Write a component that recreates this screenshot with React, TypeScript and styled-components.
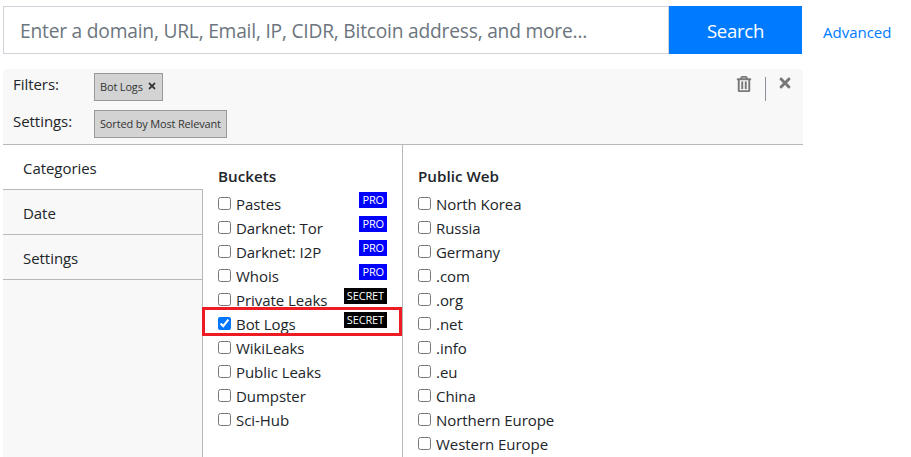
import React from "react";
import styled, { createGlobalStyle } from "styled-components";
import { FaRegTrashAlt, FaTimes } from "react-icons/fa";

const Global = createGlobalStyle`
  html, body { margin: 0; padding: 0; background: #fff; height: 457px; overflow: hidden; }
  body { font-family: "Open Sans", "Noto Sans", sans-serif; color: #212529; }
`;
const Page = styled.div`
  display: flex; flex-direction: column; height: 457px; overflow: hidden; padding: 6px 0 0 3px; box-sizing: border-box;
`;
const SearchRow = styled.form`
  display: flex; align-items: stretch; height: 48px; margin: 0;
`;
const SearchInput = styled.input`
  width: 666px; box-sizing: border-box; border: 1px solid #ced4da; padding: 0 16px;
  font: 19.2px "Open Sans", sans-serif; letter-spacing: -0.21px; color: #495057; outline: none;
  &::placeholder { color: #6c757d; opacity: 1; }
`;
const SearchButton = styled.button`
  width: 133px; border: 0; background: #007bff; color: #fff; font: 18.6px "Open Sans", sans-serif; letter-spacing: -0.3px; padding: 0;
`;
const AdvancedLink = styled.a`
  margin: 16px 0 0 21px; font-size: 15px; letter-spacing: 0; line-height: 20px; color: #007bff;
`;
const Panel = styled.section`
  width: 800px; margin-top: 15px; flex: 1; min-height: 0; display: flex; flex-direction: column;
`;
const FilterBar = styled.div`
  position: relative; height: 76px; box-sizing: border-box; background: #f8f8f8; border-bottom: 1px solid #b8b8b8;
  border-radius: 3px 3px 0 0; padding: 4px 0 0 10px; display: flex; flex-direction: column; gap: 9px;
`;
const FilterRow = styled.div`
  display: flex; align-items: flex-start; height: 28px;
`;
const FilterLabel = styled.span`
  width: 81px; font-size: 15px; letter-spacing: -0.05px; line-height: 22px;
`;
const Tag = styled.span`
  display: inline-flex; align-items: center; gap: 4px; height: 28px; box-sizing: border-box; padding: 0 5px 2px;
  background: #d3d3d3; border: 1px solid #999; font-size: 11px; letter-spacing: -0.17px; color: #333;
`;
const BarActions = styled.div`
  position: absolute; top: 6px; right: 10px; display: flex; align-items: flex-start; color: #777;
`;
const TrashIcon = styled(FaRegTrashAlt)`
  stroke: currentColor; stroke-width: 14px; margin-top: 1px;
`;
const Divider = styled.span`
  width: 1px; height: 24px; margin: 2px 11px 0 13px; background: #8a8f99;
`;
const Body = styled.div`
  flex: 1; min-height: 0; display: flex;
`;
const Tabs = styled.nav`
  width: 200px; box-sizing: border-box; display: flex; flex-direction: column; background: #f8f8f8; border-right: 1px solid #b8b8b8;
`;
const Tab = styled.div<{ $active?: boolean }>`
  height: 45px; box-sizing: border-box; padding: 1px 0 0 20px; display: flex; align-items: center;
  font-size: 15px; letter-spacing: -0.05px; background: ${p => (p.$active ? "#fff" : "transparent")};
  border-bottom: 1px solid #b8b8b8;
  margin-right: ${p => (p.$active ? "-1px" : "0")};
`;
const Column = styled.div<{ $divided?: boolean }>`
  width: 200px; box-sizing: border-box; padding: 20px 15px 0; ${p => p.$divided && "border-right: 1px solid #b8b8b8;"}
`;
const ColumnHead = styled.h3`
  margin: 0 0 5px; font-size: 15.2px; font-weight: 600; line-height: 22px;
`;
const OptionRow = styled.label<{ $marked?: boolean }>`
  position: relative; display: flex; align-items: center; height: 24px; font-size: 15px; letter-spacing: -0.05px;
  ${p => p.$marked && `&::after { content: ""; position: absolute; left: -16px; right: -15px; top: -5px; height: 29px; box-sizing: border-box; border: 3px solid #ed1c24; pointer-events: none; }`}
`;
const Check = styled.input`
  width: 13px; height: 13px; margin: 0 5px 2px 0; accent-color: #0075ff;
`;
const Badge = styled.span<{ $kind: "pro" | "secret" }>`
  position: absolute; top: 0; right: 0; height: 16px; line-height: 16px; padding: 0 3px; font-size: 11px;
  letter-spacing: -0.15px; color: #fff; background: ${p => (p.$kind === "pro" ? "#0000ff" : "#000")};
`;

const buckets: [string, ("pro" | "secret")?, boolean?][] = [
  ["Pastes", "pro"], ["Darknet: Tor", "pro"], ["Darknet: I2P", "pro"], ["Whois", "pro"],
  ["Private Leaks", "secret"], ["Bot Logs", "secret", true], ["WikiLeaks"], ["Public Leaks"], ["Dumpster"], ["Sci-Hub"],
];
const web = ["North Korea", "Russia", "Germany", ".com", ".org", ".net", ".info", ".eu", "China", "Northern Europe", "Western Europe"];

export default function App() {
  return (
    <Page>
      <Global />
      <SearchRow onSubmit={e => e.preventDefault()}>
        <SearchInput placeholder="Enter a domain, URL, Email, IP, CIDR, Bitcoin address, and more..." />
        <SearchButton type="submit">Search</SearchButton>
        <AdvancedLink>Advanced</AdvancedLink>
      </SearchRow>
      <Panel>
        <FilterBar>
          <FilterRow>
            <FilterLabel>Filters:</FilterLabel>
            <Tag>Bot Logs <FaTimes size={10} /></Tag>
          </FilterRow>
          <FilterRow>
            <FilterLabel>Settings:</FilterLabel>
            <Tag>Sorted by Most Relevant</Tag>
          </FilterRow>
          <BarActions>
            <TrashIcon size={16} />
            <Divider />
            <FaTimes size={16} />
          </BarActions>
        </FilterBar>
        <Body>
          <Tabs>
            <Tab $active>Categories</Tab>
            <Tab>Date</Tab>
            <Tab>Settings</Tab>
          </Tabs>
          <Column $divided>
            <ColumnHead>Buckets</ColumnHead>
            {buckets.map(([name, kind, checked]) => (
              <OptionRow key={name} $marked={checked}>
                <Check type="checkbox" defaultChecked={checked} />
                {name}
                {kind && <Badge $kind={kind}>{kind.toUpperCase()}</Badge>}
              </OptionRow>
            ))}
          </Column>
          <Column>
            <ColumnHead>Public Web</ColumnHead>
            {web.map(name => (
              <OptionRow key={name}>
                <Check type="checkbox" />
                {name}
              </OptionRow>
            ))}
          </Column>
        </Body>
      </Panel>
    </Page>
  );
}
